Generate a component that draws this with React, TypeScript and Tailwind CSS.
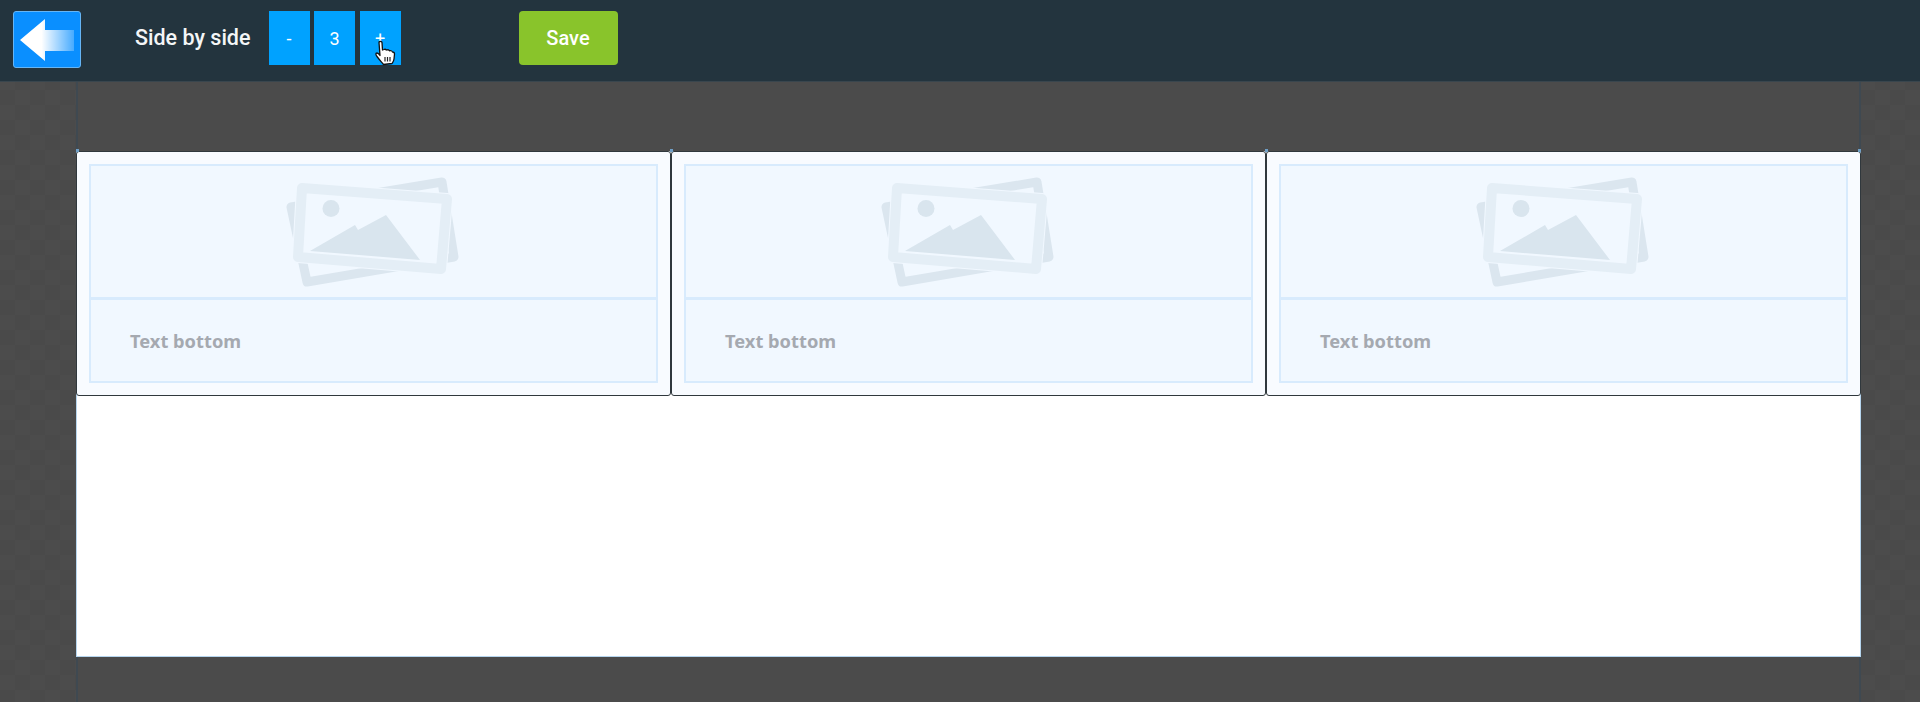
const PhotoIcon = () => (
  <svg width="185" height="120" viewBox="21 21 185 120" className="shrink-0">
    <path d="M31 56 L182 31 L194 106 L47 131 Z" fill="#f1f8ff" stroke="#dbe6ef" strokeWidth="9" strokeLinejoin="round" />
    <path d="M42 37 L187 48 L181 118 L38 106 Z" fill="#f1f8ff" stroke="#f1f8ff" strokeWidth="12" strokeLinejoin="round" />
    <path d="M42 37 L187 48 L181 118 L38 106 Z" fill="#f1f8ff" stroke="#e4eef6" strokeWidth="10" strokeLinejoin="round" />
    <circle cx="71" cy="57.500" r="8.500" fill="#d9e5ee" />
    <path d="M50 100 L95 74 L98 79 L126 64 L160 109 Z" fill="#d9e5ee" />
  </svg>
);

const HandCursor = () => (
  <svg width="22" height="26" viewBox="0 0 22 26" className="absolute left-[14px] top-[29px]">
    <path
      d="M5 2.500 C5 1 8 1 8 2.500 L8.500 10 L10 9.500 C11 9 12 9.500 12.500 10 C13.500 9.500 15 9.800 15.500 10.800 C16.500 10.300 18 10.800 18.500 12 C19.800 12 20.500 13 20.500 14 L20 19 C19.800 21 19 22 18 23.500 L9.500 24.500 C8 22.500 5.500 20 3 16.500 C1.500 14.500 1.500 13 3 13 C4 13 5 14 6 15.500 Z"
      fill="#ffffff"
      stroke="#111111"
      strokeWidth="1.300"
      strokeLinejoin="round"
    />
    <path d="M11 17 V21.500 M13.500 17 V21.500 M16 17 V21.500" stroke="#222222" strokeWidth="1.200" />
  </svg>
);

const Card = () => (
  <div className="h-[245px] rounded-[3px] border border-[#30383d] bg-[#f8fbff] p-3">
    <div className="flex h-full flex-col border-2 border-[#d8ebfd] bg-[#f1f8ff]">
      <div className="flex h-[134px] items-center justify-center overflow-hidden border-b-[3px] border-[#d8ebfd]">
        <PhotoIcon />
      </div>
      <div className="flex flex-1 items-center pl-[39px]">
        <span className="font-['Noto_Sans',sans-serif] text-[18.300px] font-bold text-[#a5a9b0]">Text bottom</span>
      </div>
    </div>
  </div>
);

const STEP_BUTTON = "relative flex h-[54px] w-[41px] items-center justify-center bg-[#00a2ff] text-[18px] text-white";

const App = () => {
  return (
    <div className="flex h-[702px] flex-col overflow-hidden bg-[#4b4b4b] bg-[repeating-conic-gradient(#4c4c4c_0_25%,#4a4a4a_0_50%)] bg-[length:30px_30px] font-['Roboto',sans-serif]">
      {/* Top toolbar */}
      <div className="flex h-[82px] shrink-0 items-start border-b border-[#39464e] bg-[#23343e] pt-[11px]">
        <button className="ml-[13px] flex h-[57px] w-[68px] items-center justify-center rounded-[3px] border border-[#66b5f5] bg-[#0a8fff]">
          <svg width="54" height="42" viewBox="0 0 54 42">
            <defs>
              <linearGradient id="arrowFade" x1="0" y1="0" x2="1" y2="0">
                <stop offset="0.4" stopColor="#ffffff" />
                <stop offset="1" stopColor="#ffffff" stopOpacity="0.25" />
              </linearGradient>
            </defs>
            <path d="M0 21 L25 0 V11 H54 V32 H25 V42 Z" fill="url(#arrowFade)" />
          </svg>
        </button>
        <span className="ml-[54px] mt-[12px] text-[21.500px] font-medium leading-[30px] text-[#f4f6f7]">Side by side</span>
        <div className="ml-[18px] flex gap-[4.500px]">
          <div className={STEP_BUTTON}>-</div>
          <div className={STEP_BUTTON}>3</div>
          <div className={STEP_BUTTON}>
            +
            <HandCursor />
          </div>
        </div>
        <button className="ml-[118px] h-[54px] w-[99px] rounded-[4px] bg-[#89c42b] text-[20px] font-medium text-white">Save</button>
      </div>

      {/* Canvas */}
      <div className="ml-[76px] w-[1785px] flex-1 bg-[#4b4b4b] pt-[69px] shadow-[inset_2px_0_0_#3f4951,inset_-2px_0_0_#3f4951]">
        <div className="relative h-[506px] border-x border-b border-[#b6d5ee] bg-white">
          <div className="-mx-px grid grid-cols-3">
            <Card />
            <Card />
            <Card />
          </div>
          {/* small handles on the top edge */}
          <span className="absolute -top-[2px] -left-[1px] h-[3px] w-[3px] bg-[#6f9fc6]"></span>
          <span className="absolute -top-[2px] left-[593px] h-[3px] w-[3px] bg-[#6f9fc6]"></span>
          <span className="absolute -top-[2px] left-[1188px] h-[3px] w-[3px] bg-[#6f9fc6]"></span>
          <span className="absolute -top-[2px] -right-[1px] h-[3px] w-[3px] bg-[#6f9fc6]"></span>
        </div>
      </div>
    </div>
  );
};

export default App;
